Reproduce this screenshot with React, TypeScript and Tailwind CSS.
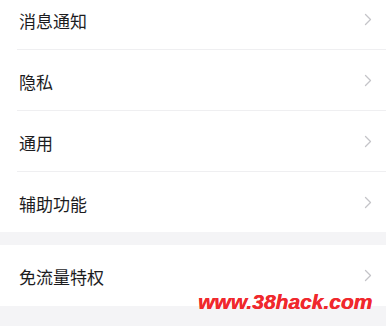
import React from "react";

const groups: string[][] = [
  ["消息通知", "隐私", "通用", "辅助功能"],
  ["免流量特权"],
];

function Chevron() {
  return (
    <svg width="8" height="13" viewBox="0 0 8 13" fill="none" className="shrink-0">
      <path d="M1.5 1.5 L6.5 6.5 L1.5 11.5" stroke="#c4c4c8" strokeWidth="1.3" strokeLinecap="round" strokeLinejoin="round" />
    </svg>
  );
}

export default function App() {
  return (
    <div className="relative w-[386px] h-[326px] overflow-hidden bg-[#f4f4f6] font-['Noto_Sans_CJK_SC','Noto_Sans',sans-serif]">
      <div className="flex flex-col gap-[13px] -mt-[11px]">
        {groups.map((items, gi) => (
          <div key={gi} className="bg-white flex flex-col">
            {items.map((label, i) => (
              <div key={label} className="flex flex-col">
                <div className="h-[60px] flex items-center justify-between pl-[19px] pr-[14px]">
                  <span className="text-[17px] text-[#1c1c1e] leading-none pt-[2px]">{label}</span>
                  <Chevron />
                </div>
                {i < items.length - 1 ? (
                  <div className="h-px bg-[#efeff1] ml-[17px]" />
                ) : gi === 1 ? (
                  <div className="h-px" />
                ) : null}
              </div>
            ))}
          </div>
        ))}
      </div>
      {/* watermark */}
      <span className="absolute left-[198px] top-[291px] text-[21px] font-bold italic leading-none text-[#f0282d] font-['Liberation_Sans',Arial,sans-serif] [text-shadow:0.4px_0_0_#f0282d]">
        www.38hack.com
      </span>
    </div>
  );
}
